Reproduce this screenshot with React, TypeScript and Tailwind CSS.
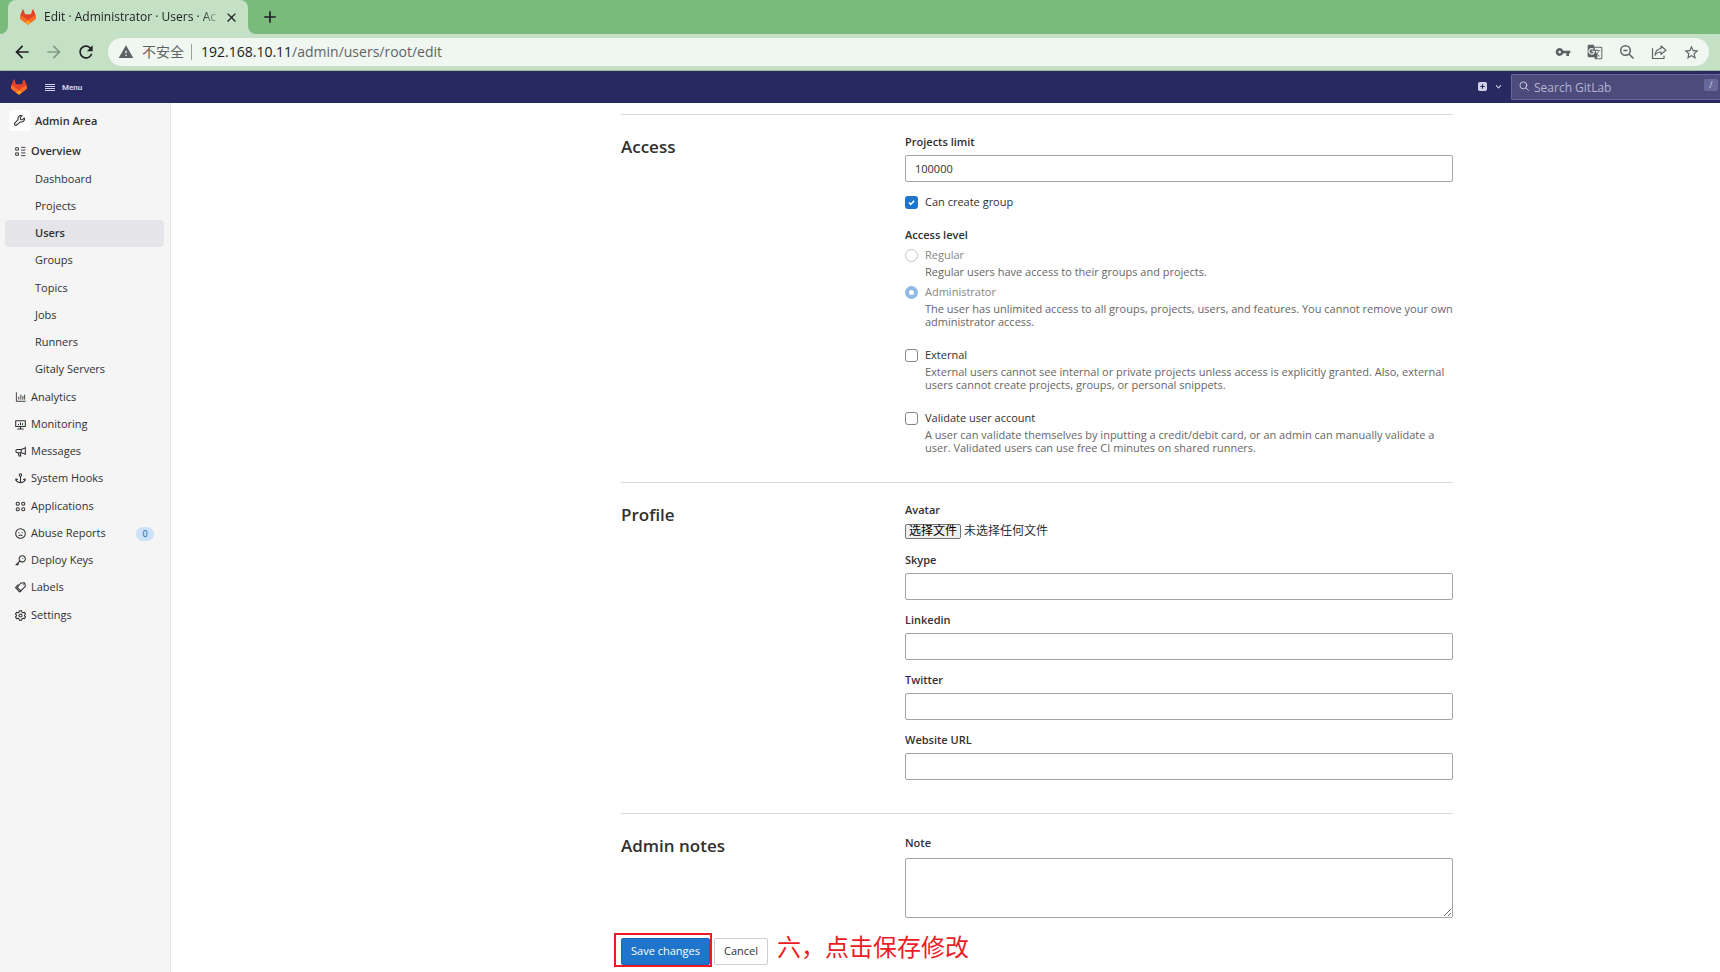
import React from "react";
import {
  MdAdd,
  MdArrowBack,
  MdArrowForward,
  MdClose,
  MdGTranslate,
  MdRefresh,
  MdStarBorder,
  MdVpnKey,
  MdWarning,
} from "react-icons/md";

type IconProps = { className?: string; children: React.ReactNode };

function Glyph({ className = "size-[11px]", children }: IconProps) {
  return (
    <svg
      viewBox="0 0 16 16"
      className={`shrink-0 ${className}`}
      fill="none"
      stroke="currentColor"
      strokeWidth="1.5"
      strokeLinecap="round"
      strokeLinejoin="round"
      aria-hidden="true"
    >
      {children}
    </svg>
  );
}

function Tanuki({ className }: { className: string }) {
  return (
    <svg viewBox="0 0 25 24" className={`shrink-0 ${className}`} aria-hidden="true">
      <path
        fill="#E24329"
        d="m24.507 9.5-.034-.09L21.082.562a.896.896 0 0 0-1.694.091l-2.29 7.01H7.825L5.535.653a.898.898 0 0 0-1.694-.09L.451 9.411.416 9.5a6.297 6.297 0 0 0 2.09 7.278l.012.01.03.022 5.16 3.867 2.56 1.935 1.554 1.176a1.051 1.051 0 0 0 1.268 0l1.555-1.176 2.56-1.935 5.197-3.89.014-.01A6.297 6.297 0 0 0 24.507 9.5Z"
      />
      <path
        fill="#FC6D26"
        d="m24.507 9.5-.034-.09a11.44 11.44 0 0 0-4.56 2.051l-7.447 5.632 4.742 3.584 5.197-3.89.014-.01A6.297 6.297 0 0 0 24.507 9.5Z"
      />
      <path
        fill="#FCA326"
        d="m7.707 20.677 2.56 1.935 1.555 1.176a1.051 1.051 0 0 0 1.268 0l1.555-1.176 2.56-1.935-4.743-3.584-4.755 3.584Z"
      />
      <path
        fill="#FC6D26"
        d="M5.01 11.461a11.43 11.43 0 0 0-4.56-2.05L.416 9.5a6.297 6.297 0 0 0 2.09 7.278l.012.01.03.022 5.16 3.867 4.745-3.584-7.444-5.632Z"
      />
    </svg>
  );
}

function BrowserChrome() {
  return (
    <header className="shrink-0">
      <div className="flex h-[34px] items-stretch bg-[#7abb7c]">
        <svg viewBox="0 0 8 8" className="size-2 self-end" aria-hidden="true">
          <path d="M8 0v8H0a8 8 0 0 0 8-8z" fill="#c5e1c5" />
        </svg>
        <div className="flex w-[240px] items-center rounded-t-lg bg-[#c5e1c5] pl-3 pr-2">
          <Tanuki className="size-4" />
          <span className="ml-2 w-[176px] whitespace-nowrap text-xs text-[#202124] [mask-image:linear-gradient(to_right,black_90%,transparent)]">
            Edit · Administrator · Users · Ac
          </span>
          <button aria-label="Close tab" className="ml-1 text-[#202124]">
            <MdClose className="size-[15px]" />
          </button>
        </div>
        <svg viewBox="0 0 8 8" className="size-2 self-end" aria-hidden="true">
          <path d="M0 0v8h8a8 8 0 0 1-8-8z" fill="#c5e1c5" />
        </svg>
        <button aria-label="New tab" className="ml-1 text-[#202124]">
          <MdAdd className="size-5" />
        </button>
      </div>
      <div className="flex h-[37px] items-center border-b border-[#9fb9a0] bg-[#c5e1c5] pl-3 pr-[11px]">
        <button aria-label="Back" className="text-[#202124]">
          <MdArrowBack className="size-5" />
        </button>
        <button aria-label="Forward" className="ml-3 text-[#85998a]">
          <MdArrowForward className="size-5" />
        </button>
        <button aria-label="Reload" className="ml-3 text-[#202124]">
          <MdRefresh className="size-5" />
        </button>
        <div className="ml-3 flex h-7 flex-1 items-center rounded-full bg-[#eff7f0] pl-[10px] pr-[9px] text-sm text-[#5f6368]">
          <MdWarning className="size-4" />
          <span className="ml-2">不安全</span>
          <span className="ml-[7px] mr-[9px] h-4 w-px bg-[#9aa09c]" />
          <span className="flex-1">
            <span className="text-[#202124]">192.168.10.11</span>/admin/users/root/edit
          </span>
          <div className="flex items-center gap-4">
            <MdVpnKey className="size-4" />
            <MdGTranslate className="size-4" />
            <Glyph className="size-4">
              <circle cx="6.500" cy="6.500" r="4.800" />
              <path d="M10 10l4.500 4.500M4.500 6.500h4" strokeLinecap="butt" />
            </Glyph>
            <Glyph className="size-4">
              <path d="M1.500 4.500v10h11.500V12" strokeWidth="1.200" />
              <path d="M10 2l5 4.200-5 4.200V8C7 8 5.200 9 4 11.200 4.300 7.500 6.500 5 10 4.500z" strokeWidth="1.200" />
            </Glyph>
            <MdStarBorder className="size-[17px]" />
          </div>
        </div>
      </div>
    </header>
  );
}

function TopNav() {
  return (
    <nav className="flex h-8 shrink-0 items-center bg-[#292961] pl-[11px] text-[#d1d0e8]">
      <a href="#home" aria-label="GitLab home">
        <Tanuki className="size-4" />
      </a>
      <button className="ml-[17px] flex items-center gap-[7px] pt-px font-['Roboto',sans-serif] text-[8px] font-bold">
        <svg viewBox="0 0 11 8" className="h-2 w-[11px] fill-current" aria-hidden="true">
          <path d="M1 0h10v1H1zM1 2h10v1H1zM1 4h10v1H1zM1 6h10v1H1z" />
        </svg>
        Menu
      </button>
      <span className="flex-1" />
      <button aria-label="Create new" className="mb-[2px] flex items-center gap-2">
        <svg viewBox="0 0 16 16" className="size-[9px]" aria-hidden="true">
          <path
            fillRule="evenodd"
            fill="currentColor"
            d="M3 0h10a3 3 0 0 1 3 3v10a3 3 0 0 1-3 3H3a3 3 0 0 1-3-3V3a3 3 0 0 1 3-3zm4 4v3H4v2h3v3h2V9h3V7H9V4z"
          />
        </svg>
        <Glyph className="size-[7px]">
          <path d="M3 6l5 5 5-5" strokeWidth="2.500" />
        </Glyph>
      </button>
      <label className="ml-[9px] flex h-[26px] w-[209px] items-center rounded-l-xs border border-r-0 border-[#69689a] bg-[#4c4b7c] pl-[7px] pr-[2px]">
        <Glyph className="mb-[3px] size-[10px]">
          <circle cx="7" cy="7" r="5.500" />
          <path d="M11 11l4 4" />
        </Glyph>
        <input
          aria-label="Search GitLab"
          placeholder="Search GitLab"
          className="ml-[5px] min-w-0 flex-1 bg-transparent pt-px text-xs outline-none placeholder:text-[#b5b4d3]"
        />
        <kbd className="mb-1 flex h-3 w-[14px] items-center justify-center rounded-xs bg-[#69689a] font-['Open_Sans',sans-serif] text-[9px]">
          /
        </kbd>
      </label>
    </nav>
  );
}

const subItems = ["Dashboard", "Projects", "Users", "Groups", "Topics", "Jobs", "Runners", "Gitaly Servers"];

const sections: { label: string; icon: React.ReactNode; count?: number }[] = [
  {
    label: "Analytics",
    icon: <path d="M2 1v12.500h13M5.500 7.500v3M8.500 4.500v6M11.500 6.500v4M14 4.500v6" strokeWidth="1.300" />,
  },
  {
    label: "Monitoring",
    icon: <path d="M1 2.500h14v8.500H1zM4 14.500h8M8 11v3.500M5 7.500v1M8 5.500v3M11 6.500v2" />,
  },
  {
    label: "Messages",
    icon: (
      <path d="M15 1.500v11M15 3L9 5H3.500a2.200 2.200 0 0 0-2.200 2.500A2.200 2.200 0 0 0 3.500 9.700H9l6 2M9 5v4.700M4.500 10l1.500 4.500h2.500L7.500 10" />
    ),
  },
  {
    label: "System Hooks",
    icon: (
      <>
        <circle cx="8" cy="3" r="1.800" />
        <path d="M8 5v9M1.500 8.500C1.500 12 4 14 8 14s6.500-2 6.500-5.500M1 10.500l.5-2 2 1M15 10.500l-.5-2-2 1" />
      </>
    ),
  },
  {
    label: "Applications",
    icon: (
      <>
        <circle cx="4" cy="4" r="2.300" />
        <circle cx="12" cy="4" r="2.300" />
        <circle cx="4" cy="12" r="2.300" />
        <circle cx="12" cy="12" r="2.300" />
      </>
    ),
  },
  {
    label: "Abuse Reports",
    count: 0,
    icon: (
      <>
        <circle cx="8" cy="8" r="7" />
        <path d="M5.500 6.500v.3M10.500 6.500v.3M5.800 11c1.200-1.300 3.200-1.300 4.400 0" />
      </>
    ),
  },
  {
    label: "Deploy Keys",
    icon: (
      <>
        <circle cx="10.500" cy="5.500" r="4.500" />
        <path d="M7.300 8.500L1.300 14.200M1.300 14.200h3.200v-2.800M11.300 4.700h.1" />
      </>
    ),
  },
  {
    label: "Labels",
    icon: (
      <>
        <path d="M8.500 1.500L14 1.200l1 5.300-6.500 6.300-5.300-4.800z" />
        <path d="M4.500 4L.8 8.200l5.700 6.300 2.500-1.700M12 4h.1" />
      </>
    ),
  },
  {
    label: "Settings",
    icon: (
      <>
        <path d="M6.500 1h3l.5 2 1.800 1 2-.6 1.500 2.600-1.500 1.400v1.200l1.500 1.400-1.500 2.600-2-.6-1.800 1-.5 2h-3L6 13l-1.800-1-2 .6L.7 10l1.500-1.400V7.400L.7 6l1.500-2.600 2 .6L6 3z" />
        <circle cx="8" cy="8" r="2.300" />
      </>
    ),
  },
];

function Sidebar() {
  return (
    <aside className="w-[171px] shrink-0 border-r border-[#e5e5e5] bg-[#f5f5f5] text-[#303030]">
      <a href="#admin" className="mt-2 flex h-[21px] items-center pl-[9px] font-semibold">
        <span className="mb-[2px] flex size-[21px] shrink-0 items-center justify-center rounded-xs bg-white">
          <Glyph>
            <path d="M9.500 6.500L9 3.800 11.800 1A4.500 4.500 0 0 0 6 6.800L1.300 11.500a2 2 0 0 0 3 3L9.200 10A4.500 4.500 0 0 0 15 4.300L12.200 7z" />
            <path d="M3 13h.1" />
          </Glyph>
        </span>
        <span className="ml-[5px]">Admin Area</span>
      </a>
      <a href="#overview" className="mt-[6px] flex h-[27px] items-center gap-[5px] pl-[15px] font-semibold">
        <Glyph>
          <path
            d="M1.500 2.500h3.500v3.500h-3.500zM1.500 10h3.500v3.500h-3.500zM9.500 2h5M9.500 6h5M9.500 10h5M9.500 14h5"
            strokeWidth="1.300"
          />
        </Glyph>
        Overview
      </a>
      <ul className="my-px">
        {subItems.map((item) => (
          <li key={item} className="pr-[6px] pl-[5px] nth-[4n]:mb-px">
            <a
              href={`#${item}`}
              className={`flex h-[27px] items-center rounded-sm pl-[30px] ${
                item === "Users" ? "bg-[#e4e4e9] font-semibold" : ""
              }`}
            >
              {item}
            </a>
          </li>
        ))}
      </ul>
      <ul>
        {sections.map(({ label, icon, count }) => (
          <li key={label} className="nth-[4n]:mb-px">
            <a href={`#${label}`} className="flex h-[27px] items-center gap-[5px] pl-[15px] pr-4">
              <Glyph>{icon}</Glyph>
              <span className="flex-1">{label}</span>
              {count !== undefined && (
                <span className="flex h-[14px] w-[18px] items-center justify-center rounded-full bg-[#cbe2f9] text-[9px] text-[#0b5cad]">
                  {count}
                </span>
              )}
            </a>
          </li>
        ))}
      </ul>
    </aside>
  );
}

function Section({ title, className, children }: { title: string; className: string; children: React.ReactNode }) {
  return (
    <section className={`flex border-t border-[#dbdbdb] ${className}`}>
      <h4 className="w-[284px] shrink-0 pt-5 text-[17px] leading-6 font-semibold">{title}</h4>
      <div className="min-w-0 flex-1 pt-[19px]">{children}</div>
    </section>
  );
}

function TextField({ id, label, value }: { id: string; label: string; value?: string }) {
  return (
    <div className="mb-[12px]">
      <label htmlFor={id} className="mb-[5px] block leading-4 font-semibold">
        {label}
      </label>
      <input
        id={id}
        defaultValue={value}
        className="block h-[27px] w-full rounded-xs border border-[#a4a4a4] bg-white px-[9px] outline-none"
      />
    </div>
  );
}

type ChoiceProps = {
  id: string;
  type: "checkbox" | "radio";
  label: string;
  help?: string;
  checked?: boolean;
  disabled?: boolean;
  className?: string;
};

function Choice({ id, type, label, help, checked, disabled, className = "" }: ChoiceProps) {
  const shape =
    type === "radio"
      ? checked
        ? "rounded-full border-4 border-[#8fbae8]"
        : "rounded-full border border-[#c4c4c4]"
      : checked
        ? "rounded-[3px] bg-[#1f75cb]"
        : "rounded-[3px] border border-[#868686]";
  return (
    <div className={`flex gap-[7px] ${className}`}>
      <span className="grid h-4 shrink-0 place-items-center">
        <input
          id={id}
          type={type}
          name={type === "radio" ? "access_level" : id}
          defaultChecked={checked}
          disabled={disabled}
          className={`col-start-1 row-start-1 size-[13px] appearance-none ${shape}`}
        />
        {type === "checkbox" && checked && (
          <svg viewBox="0 0 8 8" className="pointer-events-none col-start-1 row-start-1 size-[7px]" aria-hidden="true">
            <path d="M1 4l2.200 2.200L7 2" fill="none" stroke="white" strokeWidth="1.800" />
          </svg>
        )}
      </span>
      <div>
        <label htmlFor={id} className={`block leading-4 ${disabled ? "text-[#868686]" : ""}`}>
          {label}
        </label>
        {help && <p className="mt-[2px] leading-[13px] text-[#666666]">{help}</p>}
      </div>
    </div>
  );
}

function EditUserForm() {
  return (
    <form className="w-[832px] shrink-0 pt-[11px]" onSubmit={(e) => e.preventDefault()}>
      <Section title="Access" className="pb-7">
        <TextField id="projects-limit" label="Projects limit" value="100000" />
        <Choice id="can-create-group" type="checkbox" label="Can create group" checked />
        <fieldset className="mt-[17px]">
          <legend className="leading-4 font-semibold">Access level</legend>
          <Choice
            id="regular"
            type="radio"
            label="Regular"
            disabled
            className="mt-[4px]"
            help="Regular users have access to their groups and projects."
          />
          <Choice
            id="administrator"
            type="radio"
            label="Administrator"
            checked
            disabled
            className="mt-[6px]"
            help="The user has unlimited access to all groups, projects, users, and features. You cannot remove your own administrator access."
          />
        </fieldset>
        <Choice
          id="external"
          type="checkbox"
          label="External"
          className="mt-[19px]"
          help="External users cannot see internal or private projects unless access is explicitly granted. Also, external users cannot create projects, groups, or personal snippets."
        />
        <Choice
          id="validate"
          type="checkbox"
          label="Validate user account"
          className="mt-[19px]"
          help="A user can validate themselves by inputting a credit/debit card, or an admin can manually validate a user. Validated users can use free CI minutes on shared runners."
        />
      </Section>

      <Section title="Profile" className="pb-[21px]">
        <div className="mb-[13px]">
          <span className="block leading-4 font-semibold">Avatar</span>
          <label className="mt-[5px] flex h-4 items-center gap-[3px]">
            <input type="file" aria-label="Avatar" className="sr-only" />
            <span className="flex h-[15px] items-center rounded-xs border border-[#767676] bg-[#efefef] px-[3px] text-xs leading-3 text-black">
              选择文件
            </span>
            <span className="text-xs">未选择任何文件</span>
          </label>
        </div>
        <TextField id="skype" label="Skype" />
        <TextField id="linkedin" label="Linkedin" />
        <TextField id="twitter" label="Twitter" />
        <TextField id="website" label="Website URL" />
      </Section>

      <Section title="Admin notes" className="">
        <label htmlFor="note" className="mt-[2px] mb-[7px] block leading-4 font-semibold">
          Note
        </label>
        <textarea id="note" className="block h-[60px] w-full rounded-xs border border-[#a4a4a4] bg-white outline-none" />
      </Section>

      <div className="mt-[15px] -ml-[7px] flex items-start">
        <div className="flex h-[34px] items-end border-2 border-[#ed1c24] pl-[5px]">
          <button className="h-[27px] rounded-xs border border-[#1068bf] bg-[#1f75cb] px-[9px] text-white">
            Save changes
          </button>
        </div>
        <button
          type="button"
          className="mt-[5px] ml-[2px] h-[27px] rounded-xs border border-[#cfcfcf] bg-white px-[9px] text-[#303030]"
        >
          Cancel
        </button>
        <span className="ml-[9px] text-2xl leading-[28px] text-[#ed1c24]">六，点击保存修改</span>
      </div>
    </form>
  );
}

export default function App() {
  return (
    <div className="flex h-screen flex-col overflow-hidden bg-white font-['Open_Sans','Noto_Sans_CJK_SC',sans-serif] text-[11px] text-[#303030]">
      <BrowserChrome />
      <TopNav />
      <div className="flex min-h-0 flex-1">
        <Sidebar />
        <main className="flex flex-1 overflow-hidden pl-[450px]">
          <EditUserForm />
        </main>
      </div>
    </div>
  );
}
